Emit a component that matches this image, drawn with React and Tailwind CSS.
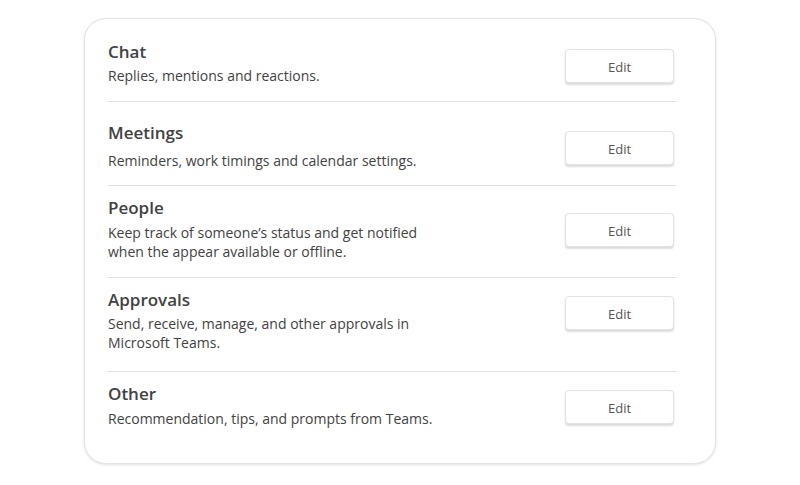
const rows = [
  {
    title: "Chat",
    lines: ["Replies, mentions and reactions."],
    pt: "pt-[22px]",
    h: "h-[83px]",
    gap: "mt-[3px]",
    btn: "mt-[8px]",
  },
  {
    title: "Meetings",
    lines: ["Reminders, work timings and calendar settings."],
    pt: "pt-[20px]",
    h: "h-[84px]",
    gap: "mt-[7px]",
    btn: "mt-[9px]",
  },
  {
    title: "People",
    lines: [
      "Keep track of someone\u2019s status and get notified",
      "when the appear available or offline.",
    ],
    pt: "pt-[11px]",
    h: "h-[92px]",
    gap: "mt-[4px]",
    btn: "mt-[16px]",
  },
  {
    title: "Approvals",
    lines: ["Send, receive, manage, and other approvals in", "Microsoft Teams."],
    pt: "pt-[11px]",
    h: "h-[94px]",
    gap: "mt-[3px]",
    btn: "mt-[7px]",
  },
  {
    title: "Other",
    lines: ["Recommendation, tips, and prompts from Teams."],
    pt: "pt-[11px]",
    h: "h-[88px]",
    gap: "mt-[4px]",
    btn: "mt-[7px]",
  },
];

function Row({ row, last }) {
  return (
    <div className={`${row.h} ${row.pt} ${last ? "" : "border-b border-[#e0e0e0]"}`}>
      <div className="flex justify-between items-start">
        <div className="text-[#424242]">
          <div className="text-[17px] leading-[22px] font-semibold">{row.title}</div>
          <div className={`${row.gap} text-[14px] leading-[19px]`}>
            {row.lines.map((l) => (
              <div key={l}>{l}</div>
            ))}
          </div>
        </div>
        <button
          className={`${row.btn} mr-[2px] w-[109px] h-[34px] pt-[3px] rounded-[4px] bg-white border border-[#e3e3e3] shadow-[0_1.5px_2px_rgba(0,0,0,0.14)] text-[13px] text-[#555555]`}
        >
          Edit
        </button>
      </div>
    </div>
  );
}

export default function App() {
  return (
    <div
      className="w-[800px] h-[485px] bg-white pt-[18px] pl-[84px]"
      style={{ fontFamily: '"Open Sans", "Noto Sans", sans-serif' }}
    >
      <div className="w-[632px] h-[446px] rounded-[22px] border border-[#e4e4e4] shadow-[0_1px_3px_rgba(0,0,0,0.12)] bg-white pl-[23px] pr-[39px]">
        {rows.map((r, i) => (
          <Row key={r.title} row={r} last={i === rows.length - 1} />
        ))}
      </div>
    </div>
  );
}
